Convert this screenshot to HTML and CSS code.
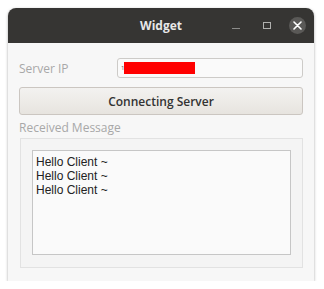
FILE: index.html
```html
<!DOCTYPE html>
<html lang="en">

<head>
    <meta charset="UTF-8">
    <title>Widget</title>
    <link rel="stylesheet" href="styles.css">
</head>

<body>
    <div class="window">
        <div class="titlebar">
            <span class="title">Widget</span>
            <div class="controls">
                <span class="btn-min"></span>
                <span class="btn-max"></span>
                <span class="btn-close">
                    <svg width="9" height="9" viewBox="0 0 9 9">
                        <path d="M1 1L8 8M8 1L1 8" stroke="#fff" stroke-width="1.6" stroke-linecap="round" />
                    </svg>
                </span>
            </div>
        </div>

        <div class="content">
            <div class="ip-row">
                <label class="muted">Server IP</label>
                <div class="ip-input">
                    <span class="caret-char">1</span>
                    <span class="redacted"></span>
                </div>
            </div>

            <button class="connect-button">Connecting Server</button>

            <div class="group-title muted">Received Message</div>
            <div class="group-frame">
                <div class="message-box">
                    <div>Hello Client ~</div>
                    <div>Hello Client ~</div>
                    <div>Hello Client ~</div>
                </div>
            </div>
        </div>
    </div>
</body>
</html>
```

FILE: styles.css
```css
body {
    margin: 0;
    padding: 8px 0 0 8px;
    background-color: #fff;
    font-family: 'Open Sans', 'DejaVu Sans', sans-serif;
    font-size: 12px;
    color: #2e2e2e;
}

.window {
    width: 306px;
    height: 273px;
    display: flex;
    flex-direction: column;
    background-color: #f7f7f7;
    border-radius: 8px 8px 0 0;
    box-shadow: 0 1px 3px rgba(0, 0, 0, 0.35);
}

.titlebar {
    height: 35px;
    flex-shrink: 0;
    background-color: #363533;
    border-radius: 8px 8px 0 0;
    position: relative;
    display: flex;
    align-items: center;
    justify-content: center;
}

.title {
    color: #e8e8e8;
    font-weight: bold;
    font-size: 12px;
}

.controls {
    position: absolute;
    right: 8px;
    top: 0;
    height: 35px;
    display: flex;
    align-items: center;
}

.btn-min {
    width: 8px;
    height: 1px;
    background-color: #8c8c8a;
    margin-top: 5px;
    margin-right: 23px;
}

.btn-max {
    width: 6px;
    height: 5px;
    border: 1px solid #b0b0ae;
    margin-right: 18px;
}

.btn-close {
    width: 17px;
    height: 17px;
    border-radius: 50%;
    background-color: #5a5957;
    display: flex;
    align-items: center;
    justify-content: center;
}

.content {
    flex: 1;
    display: flex;
    flex-direction: column;
    padding: 15px 11px 13px 11px;
}

.muted {
    color: #a8a8a8;
}

.ip-row {
    display: flex;
    align-items: center;
    height: 20px;
}

.ip-row label {
    width: 98px;
    flex-shrink: 0;
}

.ip-input {
    flex: 1;
    height: 18px;
    border: 1px solid #cdcbc8;
    border-radius: 3px;
    background-color: #fafafa;
    display: flex;
    align-items: center;
    padding-left: 3px;
}

.caret-char {
    font-size: 6px;
    line-height: 6px;
    color: #555;
}

.redacted {
    width: 71px;
    height: 12px;
    background-color: #ff0000;
}

.connect-button {
    margin-top: 9px;
    height: 28px;
    width: 100%;
    border: 1px solid #cbc6c1;
    border-radius: 3px;
    background: linear-gradient(#f3f2f0, #e7e4df);
    font-family: 'Open Sans', 'DejaVu Sans', sans-serif;
    font-size: 12px;
    font-weight: 600;
    color: #333;
    padding: 0;
}

.group-title {
    margin-top: 5px;
    height: 16px;
    line-height: 16px;
}

.group-frame {
    flex: 1;
    margin: 2px 0 0 1px;
    border: 1px solid #e2e2e2;
    background-color: #f4f4f4;
    padding: 11px 11px 12px 11px;
    display: flex;
}

.message-box {
    flex: 1;
    border: 1px solid #c6c6c6;
    background-color: #fafafa;
    padding: 4px 3px;
    font-family: 'Liberation Sans', Arial, sans-serif;
    line-height: 14px;
    color: #222;
}
```
